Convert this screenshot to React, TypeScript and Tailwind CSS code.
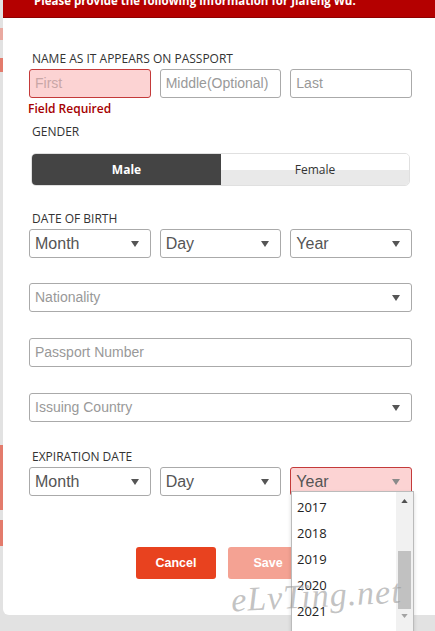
import React from "react";

const label = "pl-[3px] text-[12px] leading-4 uppercase text-[#333] [font-family:'Open_Sans',sans-serif]";

function Arrow({ color = "#555" }: { color?: string }) {
  return (
    <svg viewBox="0 0 8 6" className="h-[6px] w-[8px]" aria-hidden>
      <path d="M0 0h8L4 6z" fill={color} />
    </svg>
  );
}

function Select({ text, muted, error }: { text: string; muted?: boolean; error?: boolean }) {
  return (
    <div
      className={
        "flex h-[29px] items-center justify-between rounded-[3px] border pl-[5px] pr-[11px] [font-family:'Liberation_Sans',Arial,sans-serif] " +
        (error ? "border-[#c43a3a] bg-[#fcd3d3]" : "border-[#aaa] bg-white")
      }
    >
      <span className={muted ? "text-[14px] text-[#999]" : "text-[16px] text-[#555]"}>{text}</span>
      <Arrow color={error ? "#8a8a8a" : "#555"} />
    </div>
  );
}

function Input({ text, error }: { text: string; error?: boolean }) {
  return (
    <div
      className={
        "flex h-[29px] items-center rounded-[3px] border pl-[5px] text-[14px] [font-family:'Liberation_Sans',Arial,sans-serif] " +
        (error ? "border-[#c43a3a] bg-[#fcd3d3] text-[#c8a6a6]" : "border-[#aaa] bg-white text-[#999]")
      }
    >
      {text}
    </div>
  );
}

export default function App() {
  return (
    <div className="flex h-[631px] w-[435px] overflow-hidden bg-[#e2e2e2]">
      {/* page peeking out behind the modal */}
      <div className="flex w-[3px] shrink-0 flex-col">
        <div className="mt-[28px] h-[12px] bg-[#e9a9a0]" />
        <div className="mt-[18px] h-[14px] bg-[#e37b6c]" />
        <div className="mt-[373px] h-[65px] bg-[#e37b6c]" />
        <div className="mt-[10px] h-[26px] bg-[#e37b6c]" />
      </div>

      <div className="relative h-[615px] flex-1 rounded-bl-[6px] bg-white">
        {/* header */}
        <div className="h-[18px] overflow-hidden border-b border-[#8f0000] bg-[#b40000] pl-[31px]">
          <div className="-mt-[8px] text-[11.5px] font-bold leading-[18px] text-white [font-family:'Open_Sans',sans-serif]">
            Please provide the following information for Jiafeng Wu:
          </div>
        </div>

        <div className="w-[409px] pl-[26px]">
          <div className={"mt-[33px] " + label}>Name as it appears on passport</div>
          <div className="mt-[2px] grid grid-cols-3 gap-[9px]">
            <Input text="First" error />
            <Input text="Middle(Optional)" />
            <Input text="Last" />
          </div>
          <div className="mt-[3px] -ml-[1px] text-[12px] font-semibold leading-4 text-[#a50000] [font-family:'Open_Sans',sans-serif]">
            Field Required
          </div>

          <div className={"mt-[7px] " + label}>Gender</div>
          <div className="mx-[2px] mt-[13px] flex h-[33px] overflow-hidden rounded-[5px] border border-[#e0e0e0] text-[12px] [font-family:'Open_Sans',sans-serif]">
            <div className="flex w-[189px] items-center justify-center bg-[#444] font-bold text-white">Male</div>
            <div className="flex flex-1 items-center justify-center bg-[linear-gradient(#fff_50%,#e9e9e9_50%)] text-[#333]">
              Female
            </div>
          </div>

          <div className={"mt-[25px] " + label}>Date of birth</div>
          <div className="mt-[2px] grid grid-cols-3 gap-[9px]">
            <Select text="Month" />
            <Select text="Day" />
            <Select text="Year" />
          </div>

          <div className="mt-[25px]">
            <Select text="Nationality" muted />
          </div>
          <div className="mt-[26px]">
            <Input text="Passport Number" />
          </div>
          <div className="mt-[26px]">
            <Select text="Issuing Country" muted />
          </div>

          <div className={"mt-[27px] " + label}>Expiration date</div>
          <div className="mt-[2px] grid grid-cols-3 gap-[9px]">
            <Select text="Month" />
            <Select text="Day" />
            <Select text="Year" error />
          </div>

          <div className="mt-[51px] flex gap-[12px] pl-[107px] text-[12.5px] font-bold text-white [font-family:'Liberation_Sans',Arial,sans-serif]">
            <div className="flex h-[32px] w-[80px] items-center justify-center rounded-[3px] bg-[#e8421f]">Cancel</div>
            <div className="flex h-[32px] w-[80px] items-center justify-center rounded-[3px] bg-[#f4a293]">Save</div>
          </div>
        </div>

        {/* open year dropdown */}
        <div className="absolute left-[288px] top-[491px] flex h-[150px] w-[123px] border border-[#bbb] bg-white shadow-[0_2px_4px_rgba(0,0,0,0.15)]">
          <div className="flex-1 pt-[2px] pl-[5px] text-[13px] text-[#222] [font-family:'Open_Sans',sans-serif]">
            {["2017", "2018", "2019", "2020", "2021"].map((y) => (
              <div key={y} className="h-[26px] leading-[26px]">{y}</div>
            ))}
          </div>
          <div className="flex w-[17px] flex-col items-center bg-[#f1f1f1]">
            <svg viewBox="0 0 8 5" className="mt-[7px] h-[4px] w-[7px]" aria-hidden>
              <path d="M0 5h8L4 0z" fill="#505050" />
            </svg>
            <div className="mt-[48px] h-[58px] w-[13px] bg-[#c1c1c1]" />
            <svg viewBox="0 0 8 5" className="mt-[5px] h-[4px] w-[7px]" aria-hidden>
              <path d="M0 0h8L4 5z" fill="#a3a3a3" />
            </svg>
          </div>
        </div>

        {/* watermark */}
        <div className="pointer-events-none absolute left-[228px] top-[570px] -rotate-3 text-[34px] italic tracking-[1px] text-[#9a9a9a]/60 [font-family:'Liberation_Serif',serif]">
          eLvTing.net
        </div>
      </div>
    </div>
  );
}
